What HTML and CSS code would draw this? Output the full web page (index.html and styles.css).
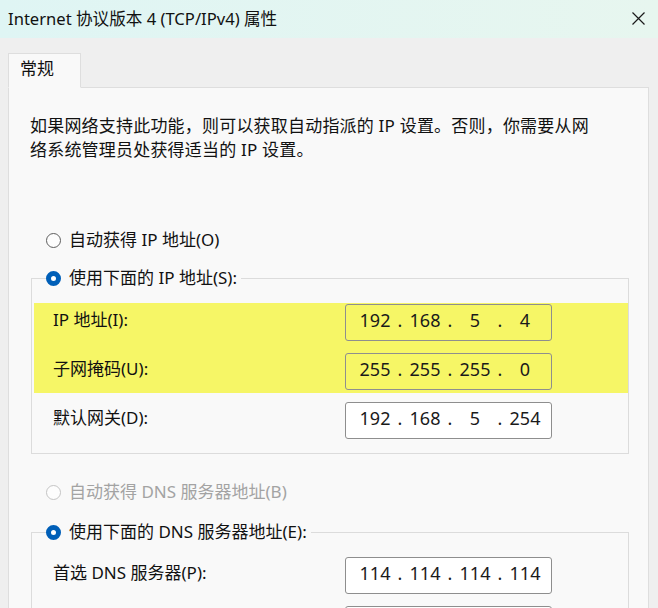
FILE: index.html
```html
<!DOCTYPE html>
<html lang="zh-CN">
<head>
  <meta charset="UTF-8">
  <title>Internet 协议版本 4 (TCP/IPv4) 属性</title>
  <link rel="stylesheet" href="styles.css">
</head>
<body>

  <!-- Title bar -->
  <div class="titlebar">
    <span class="title">Internet 协议版本 4 (TCP/IPv4) 属性</span>
    <svg class="close" width="13" height="13" viewBox="0 0 13 13">
      <path d="M0.5 0.5L12.5 12.5M12.5 0.5L0.5 12.5" stroke="#1a1a1a" stroke-width="1.2" fill="none"/>
    </svg>
  </div>

  <!-- Tabs -->
  <div class="tabs">
    <div class="tab">常规</div>
  </div>

  <div class="panel">
    <p class="intro">如果网络支持此功能，则可以获取自动指派的 IP 设置。否则，你需要从网<br>络系统管理员处获得适当的 IP 设置。</p>

    <!-- IP -->
    <div class="radio-row first"><span class="radio"></span>自动获得 IP 地址(O)</div>
    <fieldset class="group">
      <legend class="radio-row"><span class="radio checked"></span>使用下面的 IP 地址(S):</legend>
      <div class="highlight">
        <div class="field">
          <label>IP 地址(I):</label>
          <div class="ip-box"><span class="seg">192</span><span class="dot">.</span><span class="seg">168</span><span class="dot">.</span><span class="seg">5</span><span class="dot">.</span><span class="seg">4</span></div>
        </div>
        <div class="field">
          <label>子网掩码(U):</label>
          <div class="ip-box"><span class="seg">255</span><span class="dot">.</span><span class="seg">255</span><span class="dot">.</span><span class="seg">255</span><span class="dot">.</span><span class="seg">0</span></div>
        </div>
      </div>
      <div class="field gateway">
        <label>默认网关(D):</label>
        <div class="ip-box"><span class="seg">192</span><span class="dot">.</span><span class="seg">168</span><span class="dot">.</span><span class="seg">5</span><span class="dot">.</span><span class="seg">254</span></div>
      </div>
    </fieldset>

    <!-- DNS -->
    <div class="radio-row second disabled"><span class="radio"></span>自动获得 DNS 服务器地址(B)</div>
    <fieldset class="group dns">
      <legend class="radio-row"><span class="radio checked"></span>使用下面的 DNS 服务器地址(E):</legend>
      <div class="field">
        <label>首选 DNS 服务器(P):</label>
        <div class="ip-box"><span class="seg">114</span><span class="dot">.</span><span class="seg">114</span><span class="dot">.</span><span class="seg">114</span><span class="dot">.</span><span class="seg">114</span></div>
      </div>
      <!-- next row starts at the bottom edge, only the box outline shows -->
      <div class="field">
        <label></label>
        <div class="ip-box"></div>
      </div>
    </fieldset>
  </div>

</body>
</html>
```

FILE: styles.css
```css
* {
  box-sizing: border-box;
}

html,
body {
  height: 100%;
  overflow: hidden;
}

body {
  margin: 0;
  background: #efefef;
  color: #111;
  font-family: 'Noto Sans', 'Noto Sans CJK SC', sans-serif;
  font-size: 17px;
}

.titlebar {
  display: flex;
  align-items: center;
  justify-content: space-between;
  height: 38px;
  padding: 0 13px 0 8px;
  background: linear-gradient(90deg, #dff5f4, #e7f6ef);
}

.title {
  font-size: 16.6px;
  line-height: 20px;
}

.close {
  display: block;
  margin-top: -2px;
}

.tabs {
  display: flex;
  padding: 15px 0 0 8px;
}

.tab {
  position: relative;
  width: 73px;
  height: 35px;
  margin-bottom: -1px;
  padding: 3px 0 0 11px;
  line-height: 24px;
  background: #f9f9f9;
  border: 1px solid #dedede;
  border-bottom: 1px solid #f9f9f9;
}

.panel {
  margin: 0 9px 0 8px;
  padding: 26px 19px 0 22px;
  height: 560px;
  background: #f9f9f9;
  border: 1px solid #dedede;
}

.intro {
  margin: 0 0 0 -1px;
  line-height: 24px;
  letter-spacing: 0.2px;
}

.radio-row {
  display: flex;
  align-items: center;
  height: 24px;
  line-height: 24px;
}

.radio-row.first {
  margin: 66px 0 0 15px;
}

.radio-row.second {
  margin: 26px 0 0 15px;
}

.radio-row.disabled {
  color: #a3a3a3;
}

.radio {
  width: 15px;
  height: 15px;
  margin-right: 8px;
  border-radius: 50%;
  border: 1px solid #5e5e5e;
  background: #fdfdfd;
}

.radio-row.disabled .radio {
  border-color: #c4c4c4;
}

.radio.checked {
  border: 5px solid #005fb8;
  background: #fff;
}

.group {
  margin: 14px 0 0;
  padding: 13px 0 14px 2px;
  min-width: 0;
  border: 1px solid #dcdcdc;
}

.group.dns {
  margin-top: 16px;
}

.group legend {
  margin-left: 12px;
  padding: 0 4px 0 0;
}

.highlight {
  display: flex;
  flex-direction: column;
  gap: 12px;
  padding: 1px 0 3px;
  background: #f6f666;
}

.field {
  display: grid;
  grid-template-columns: 292px 207px;
  align-items: center;
  padding-left: 19px;
}

.field label {
  line-height: 24px;
  padding-bottom: 5px;
}

.field.gateway {
  margin-top: 9px;
}

.group.dns .field + .field {
  margin-top: 12px;
}

.ip-box {
  display: flex;
  align-items: center;
  width: 207px;
  height: 37px;
  padding: 0 0 5px 9px;
  background: #fff;
  border: 1px solid #8e8e8e;
  border-radius: 3px;
  font-size: 18px;
  color: #1a1a1a;
}

.highlight .ip-box {
  background: transparent;
}

.seg {
  width: 40px;
  text-align: center;
}

.dot {
  width: 10px;
  text-align: center;
}
```
